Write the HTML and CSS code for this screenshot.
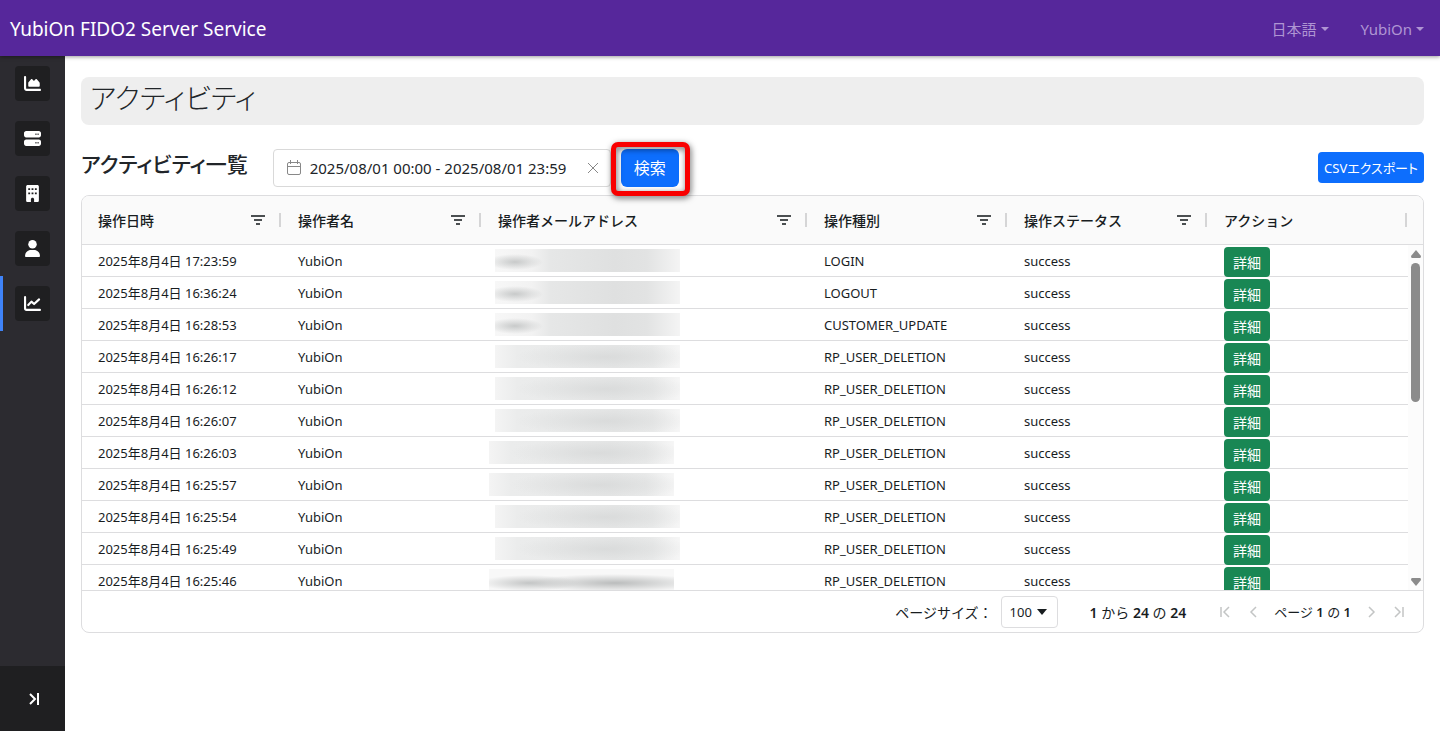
FILE: index.html
```
<!DOCTYPE html>
<html lang="ja">
<head>
    <meta charset="UTF-8">
    <meta name="viewport" content="width=device-width, initial-scale=1.0">
    <title>YubiOn FIDO2 Server Service</title>
    <link rel="stylesheet" href="styles.css">
</head>
<body>

    <header class="navbar">
        <a class="brand" href="#">YubiOn FIDO2 Server Service</a>
        <nav class="nav-menu">
            <button type="button" class="nav-toggle">日本語</button>
            <button type="button" class="nav-toggle">YubiOn</button>
        </nav>
    </header>

    <div class="layout">
        <aside class="sidebar">
            <nav class="side-nav">
                <a class="side-item" href="#" aria-label="ダッシュボード">
                    <span class="side-icon">
                        <svg width="17" height="17" viewBox="0 0 512 512" fill="currentColor"><path d="M64 64c0-18-14-32-32-32S0 46 0 64v336c0 44 36 80 80 80h400c18 0 32-14 32-32s-14-32-32-32H80c-9 0-16-7-16-16V64z"/><path d="M128 320v-84c0-8 3-15 8-21l76-88c10-12 27-12 37 0l40 43c5 5 13 5 18 0l42-42c10-10 27-9 36 2l77 91c8 10 12 20 12 32v67c0 18-14 32-32 32H160c-18 0-32-14-32-32z"/></svg>
                    </span>
                </a>
                <a class="side-item" href="#" aria-label="サーバー">
                    <span class="side-icon">
                        <svg width="17" height="17" viewBox="0 0 512 512" fill="currentColor" fill-rule="evenodd"><path d="M64 32C29 32 0 61 0 96v64c0 35 29 64 64 64h384c35 0 64-29 64-64V96c0-35-29-64-64-64H64zm280 72h32v48h-32zm64 0h32v48h-32zM64 288c-35 0-64 29-64 64v64c0 35 29 64 64 64h384c35 0 64-29 64-64v-64c0-35-29-64-64-64H64zm280 72h32v48h-32zm64 0h32v48h-32z"/></svg>
                    </span>
                </a>
                <a class="side-item" href="#" aria-label="組織">
                    <span class="side-icon">
                        <svg width="13" height="17" viewBox="0 0 384 512" fill="currentColor" fill-rule="evenodd"><path d="M48 0C21 0 0 21 0 48v416c0 27 21 48 48 48h96v-80c0-27 21-48 48-48s48 21 48 48v80h96c27 0 48-21 48-48V48c0-27-21-48-48-48H48zm16 96h56v56H64zm100 0h56v56h-56zm100 0h56v56h-56zM64 224h56v56H64zm100 0h56v56h-56zm100 0h56v56h-56z"/></svg>
                    </span>
                </a>
                <a class="side-item" href="#" aria-label="ユーザー">
                    <span class="side-icon">
                        <svg width="15" height="17" viewBox="0 0 448 512" fill="currentColor"><circle cx="224" cy="128" r="128"/><path d="M178 304C80 304 0 384 0 482c0 17 13 30 30 30h388c17 0 30-13 30-30 0-98-80-178-178-178h-92z"/></svg>
                    </span>
                </a>
                <a class="side-item active" href="#" aria-label="アクティビティ">
                    <span class="side-icon">
                        <svg width="17" height="17" viewBox="0 0 512 512" fill="none" stroke="currentColor" stroke-width="64" stroke-linecap="round" stroke-linejoin="round"><path d="M32 64v336c0 26 22 48 48 48h400"/><path d="M128 304l96-104 80 72 150-140"/></svg>
                    </span>
                </a>
            </nav>
            <button type="button" class="side-expand" aria-label="メニューを開く">
                <svg width="12" height="14" viewBox="0 0 12 14" fill="none" stroke="currentColor" stroke-width="2"><path d="M2 2l5 5-5 5M10 1v12"/></svg>
            </button>
        </aside>

        <main class="content">
            <h1 class="page-title">アクティビティ</h1>

            <div class="toolbar">
                <h2 class="section-title">アクティビティ一覧</h2>
                <div class="date-picker">
                    <svg width="16" height="16" viewBox="0 0 16 16" fill="none" stroke="currentColor"><rect x="1.500" y="2.500" width="13" height="12" rx="1.500"/><path d="M1.500 6.500h13M4.500 0v4M11.500 0v4"/></svg>
                    <input type="text" aria-label="期間" value="2025/08/01 00:00 - 2025/08/01 23:59">
                    <button type="button" class="date-clear" aria-label="クリア">
                        <svg width="12" height="12" viewBox="0 0 12 12" fill="none" stroke="currentColor"><path d="M1 1l10 10M11 1L1 11"/></svg>
                    </button>
                </div>
                <div class="search-box">
                    <button type="button" class="btn btn-primary">検索</button>
                    <span class="highlight"></span>
                </div>
                <button type="button" class="btn btn-primary btn-sm export">CSVエクスポート</button>
            </div>

            <section class="grid">
                <div class="grid-main">
                    <div class="grid-viewport">
                        <table>
                            <colgroup>
                                <col class="col-fixed">
                                <col class="col-fixed">
                                <col>
                                <col class="col-fixed">
                                <col class="col-fixed">
                                <col class="col-fixed">
                            </colgroup>
                            <thead>
                                <tr id="gridHead"></tr>
                            </thead>
                            <tbody id="gridBody"></tbody>
                        </table>
                    </div>
                    <div class="scroll-column">
                        <div class="scroll-head"></div>
                        <div class="scroll-track">
                            <svg width="10" height="8" viewBox="0 0 10 8" fill="currentColor"><path d="M5 0l5 6q0 2-1 2H1Q0 8 0 6z"/></svg>
                            <div class="scroll-thumb"></div>
                            <svg class="scroll-down" width="10" height="8" viewBox="0 0 10 8" fill="currentColor"><path d="M5 8l5-6q0-2-1-2H1Q0 0 0 2z"/></svg>
                        </div>
                    </div>
                </div>

                <footer class="pager">
                    <div class="page-size">
                        <span>ページサイズ：</span>
                        <span class="select-wrap">
                            <select aria-label="ページサイズ">
                                <option>100</option>
                            </select>
                            <svg width="10" height="6" viewBox="0 0 10 6" fill="currentColor"><path d="M0 0h10L5 6z"/></svg>
                        </span>
                    </div>
                    <div class="row-count"><b>1</b> から <b>24</b> の <b>24</b></div>
                    <div class="page-nav">
                        <button type="button" disabled aria-label="最初のページ"><svg width="16" height="16" viewBox="0 0 16 16"><path d="M3 3v10M11 3L6 8l5 5"/></svg></button>
                        <button type="button" disabled aria-label="前のページ"><svg width="16" height="16" viewBox="0 0 16 16"><path d="M10 3L5 8l5 5"/></svg></button>
                        <span class="page-label">ページ <b>1</b> の <b>1</b></span>
                        <button type="button" disabled aria-label="次のページ"><svg width="16" height="16" viewBox="0 0 16 16"><path d="M6 3l5 5-5 5"/></svg></button>
                        <button type="button" disabled aria-label="最後のページ"><svg width="16" height="16" viewBox="0 0 16 16"><path d="M4 3l5 5-5 5M12 3v10"/></svg></button>
                    </div>
                </footer>
            </section>
        </main>
    </div>

    <script src="script.js"></script>
</body>
</html>
```
FILE: styles.css
```
* {
    box-sizing: border-box;
}

body {
    margin: 0;
    font-family: "Noto Sans", "Noto Sans CJK JP", sans-serif;
    font-size: 15px;
    color: #212529;
    background-color: #fff;
}

button, input, select {
    font-family: inherit;
}

svg {
    display: block;
    flex: none;
}

/* navbar */
.navbar {
    position: relative;
    z-index: 2;
    display: flex;
    align-items: center;
    justify-content: space-between;
    height: 56px;
    padding: 1px 16px 0 10px;
    background-color: #56279b;
    box-shadow: 0 1px 4px rgba(0, 0, 0, 0.4);
}

.brand {
    color: #fff;
    font-size: 19px;
    text-decoration: none;
}

.nav-menu {
    display: flex;
    gap: 32px;
}

.nav-toggle {
    display: flex;
    align-items: center;
    gap: 4px;
    padding: 0;
    border: none;
    background: none;
    color: #af95d3;
    font-size: 15px;
}

.nav-toggle::after {
    content: "";
    border-top: 4px solid;
    border-left: 4px solid transparent;
    border-right: 4px solid transparent;
}

/* sidebar */
.layout {
    display: flex;
    min-height: calc(100vh - 56px);
}

.sidebar {
    display: flex;
    flex-direction: column;
    justify-content: space-between;
    flex: none;
    width: 65px;
    background-color: #2c2b30;
}

.side-item {
    display: flex;
    align-items: center;
    justify-content: center;
    height: 55px;
    color: #fff;
    border: solid transparent;
    border-width: 0 3px;
}

.side-item.active {
    border-left-color: #3f83f8;
}

.side-icon {
    display: flex;
    align-items: center;
    justify-content: center;
    width: 35px;
    height: 35px;
    border-radius: 4px;
    background-color: #1f1f21;
}

.side-expand {
    display: flex;
    align-items: center;
    justify-content: center;
    height: 65px;
    padding: 0 0 0 3px;
    border: none;
    background-color: #1f1f21;
    color: #fff;
}

/* content */
.content {
    flex: 1;
    min-width: 0;
    padding: 21px 16px;
}

.page-title {
    height: 48px;
    margin: 0;
    padding: 0 9px;
    border-radius: 8px;
    background-color: #eee;
    font-size: 28px;
    font-weight: 300;
    line-height: 42px;
    font-feature-settings: "palt";
}

.toolbar {
    display: flex;
    align-items: center;
    margin: 24px 0 8px;
}

.section-title {
    margin: 0 25px 8px 0;
    font-size: 21px;
    font-weight: 500;
    line-height: 30px;
    font-feature-settings: "palt";
}

.date-picker {
    display: flex;
    align-items: center;
    width: 338px;
    height: 38px;
    padding: 0 11px 0 12px;
    border: 1px solid #d9d9d9;
    border-radius: 4px;
    color: #888;
}

.date-picker input {
    flex: 1;
    min-width: 0;
    padding: 0 0 0 8px;
    border: none;
    background: none;
    color: #212529;
    font-size: 15px;
}

.date-clear {
    padding: 0;
    border: none;
    background: none;
    color: #888;
}

.search-box {
    position: relative;
    margin-left: 10px;
}

.highlight {
    position: absolute;
    top: -7px;
    right: -11px;
    bottom: -9px;
    left: -10px;
    border: 5px solid #f90000;
    border-radius: 7px;
    filter: drop-shadow(1px 2px 3px rgba(0, 0, 0, 0.6));
    pointer-events: none;
}

.btn {
    display: block;
    border: none;
    color: #fff;
}

.btn-primary {
    height: 38px;
    padding: 0 13px 2px;
    border-radius: 6px;
    background-color: #0d6efd;
    font-size: 16px;
}

.btn-sm {
    height: 31px;
    padding: 0 6px;
    border-radius: 4px;
    font-size: 13px;
}

.export {
    margin: 0 0 2px auto;
    font-feature-settings: "palt";
}

/* activity grid */
.grid {
    display: flex;
    flex-direction: column;
    height: calc(60vh - 1px);
    border: 1px solid #dddddf;
    border-radius: 8px;
    overflow: hidden;
    color: #181d1f;
}

.grid-main {
    display: flex;
    flex: 1;
    min-height: 0;
}

.grid-viewport {
    flex: 1;
    min-width: 0;
    overflow: hidden;
}

.grid table {
    width: 100%;
    table-layout: fixed;
    border-collapse: separate;
    border-spacing: 0;
}

.col-fixed {
    width: 200px;
}

.grid th,
.grid td {
    padding: 0 0 0 16px;
    border-bottom: 1px solid #dddddf;
    text-align: left;
    white-space: nowrap;
}

.grid th {
    height: 49px;
    background-color: #fafafa;
    font-size: 14px;
    font-weight: 500;
}

.grid td {
    height: 32px;
    padding-top: 2px;
    font-size: 13px;
    line-height: 29px;
}

.head-cell {
    display: flex;
    align-items: center;
    gap: 14px;
}

.head-cell span {
    flex: 1;
}

.head-cell::after {
    content: "";
    width: 2px;
    height: 14px;
    margin-right: 1px;
    background-color: #d5d5d6;
}

.btn-detail {
    height: 30px;
    margin-bottom: -1px;
    padding: 0 9px;
    border-radius: 4px;
    background-color: #198754;
    font-size: 14px;
}

/* hidden mail addresses */
.masked {
    width: 185px;
    height: 23px;
    margin: 0 0 2px -3px;
    background:
        radial-gradient(ellipse 90px 14px at 110px 12px, rgba(205, 207, 207, 0.5), transparent),
        linear-gradient(90deg, #f4f4f4, #ebecec 12%, #e9eaea 40%, #e6e7e7 65%, #e9eaea 85%, #f6f6f6);
}

.masked.short {
    background:
        radial-gradient(ellipse 28px 8px at 20px 13px, rgba(195, 197, 197, 0.9), transparent),
        linear-gradient(90deg, #f7f7f7, #f2f2f2 20%, #e6e7e7 30%, #dfe0e0 65%, #e2e3e3 82%, #f4f4f4);
}

.masked.shift {
    margin-left: -9px;
}

.masked.dark {
    background:
        radial-gradient(ellipse 50px 8px at 40px 14px, rgba(190, 192, 192, 0.9), transparent),
        radial-gradient(ellipse 90px 9px at 126px 14px, rgba(180, 182, 182, 0.9), transparent),
        #f8f8f8;
}

/* scrollbar */
.scroll-column {
    display: flex;
    flex-direction: column;
    flex: none;
    width: 15px;
}

.scroll-head {
    height: 49px;
    border-bottom: 1px solid #dddddf;
    background-color: #fafafa;
}

.scroll-track {
    display: flex;
    flex: 1;
    flex-direction: column;
    align-items: center;
    padding: 5px 0 4px;
    background-color: #fcfcfc;
    color: #8b8b8b;
}

.scroll-thumb {
    width: 9px;
    height: 139px;
    margin-top: 5px;
    border-radius: 5px;
    background-color: #8b8b8b;
}

.scroll-down {
    margin-top: auto;
}

/* pager */
.pager {
    display: flex;
    align-items: center;
    justify-content: flex-end;
    gap: 32px;
    flex: none;
    height: 42px;
    padding: 1px 16px 0;
    border-top: 1px solid #dddddf;
    font-size: 13px;
}

.pager b {
    font-weight: 600;
}

.page-size {
    display: flex;
    align-items: center;
    gap: 8px;
    font-size: 14px;
}

.row-count {
    font-size: 14px;
}

.select-wrap {
    position: relative;
}

.select-wrap select {
    appearance: none;
    display: block;
    width: 57px;
    height: 32px;
    padding: 0 0 0 8px;
    border: 1px solid #dddddf;
    border-radius: 4px;
    background-color: #fff;
    color: #181d1f;
    font-size: 13px;
}

.select-wrap svg {
    position: absolute;
    top: 13px;
    right: 11px;
    pointer-events: none;
}

.page-nav {
    display: flex;
    align-items: center;
    gap: 12px;
}

.page-nav button {
    padding: 0;
    border: none;
    background: none;
}

.page-nav svg {
    fill: none;
    stroke: #c3c5c5;
    stroke-width: 1.5;
}
```
FILE: script.js
```
const columns = ['操作日時', '操作者名', '操作者メールアドレス', '操作種別', '操作ステータス', 'アクション'];

const rows = [
    ['17:23:59', 'LOGIN', 'short'],
    ['16:36:24', 'LOGOUT', 'short'],
    ['16:28:53', 'CUSTOMER_UPDATE', 'short'],
    ['16:26:17', 'RP_USER_DELETION', ''],
    ['16:26:12', 'RP_USER_DELETION', ''],
    ['16:26:07', 'RP_USER_DELETION', ''],
    ['16:26:03', 'RP_USER_DELETION', 'shift'],
    ['16:25:57', 'RP_USER_DELETION', 'shift'],
    ['16:25:54', 'RP_USER_DELETION', ''],
    ['16:25:49', 'RP_USER_DELETION', ''],
    ['16:25:46', 'RP_USER_DELETION', 'shift dark']
];

const filterIcon = '<svg width="14" height="10" viewBox="0 0 14 10" fill="none" stroke="#4b4f51" stroke-width="2"><path d="M0 1h14M3 5h8M5 9h4"/></svg>';

document.getElementById('gridHead').innerHTML = columns.map((name, i) => `
    <th>
        <div class="head-cell"><span>${name}</span>${i < columns.length - 1 ? filterIcon : ''}</div>
    </th>`).join('');

document.getElementById('gridBody').innerHTML = rows.map(([time, type, mask]) => `
    <tr>
        <td>2025年8月4日 ${time}</td>
        <td>YubiOn</td>
        <td><div class="masked ${mask}"></div></td>
        <td>${type}</td>
        <td>success</td>
        <td><button type="button" class="btn btn-detail">詳細</button></td>
    </tr>`).join('');
```
